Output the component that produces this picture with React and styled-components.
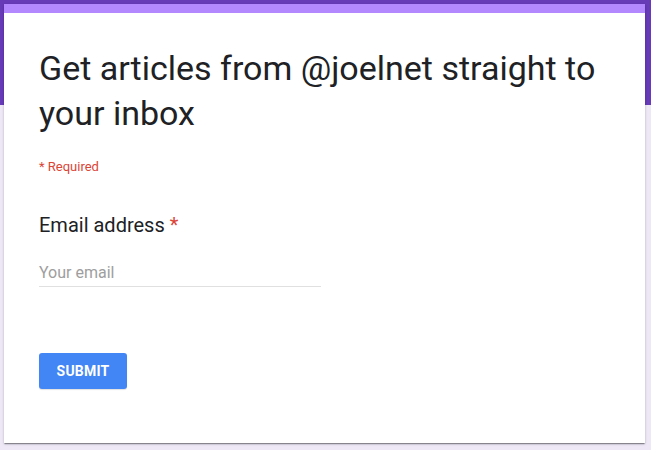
import React from 'react';
import styled, { createGlobalStyle } from 'styled-components';

const COLORS = {
  band: '#673ab7',
  page: '#ede7f6',
  accent: '#b388ff',
  text: '#202124',
  required: '#db4437',
  placeholder: '#9e9e9e',
  line: '#e0e0e0',
  button: '#4285f4',
  white: '#ffffff',
};

const GlobalStyle = createGlobalStyle`
  html, body {
    margin: 0;
    padding: 0;
  }
  body {
    font-family: Roboto, "Liberation Sans", Arial, sans-serif;
    background: ${COLORS.page};
  }
`;

const App = () => {
  return (
    <>
      <GlobalStyle />
      <Page>
        <Card>
          <Title>Get articles from @joelnet straight to your inbox</Title>
          <RequiredNote>* Required</RequiredNote>
          <Question>
            <Label>
              Email address <Star>*</Star>
            </Label>
            <EmailInput type="email" placeholder="Your email" />
          </Question>
          <SubmitButton type="button">Submit</SubmitButton>
        </Card>
      </Page>
    </>
  );
};

export default App;

const Page = styled.div`
  min-height: 450px;
  padding: 4px 6px 0 4px;
  box-sizing: border-box;
  background: linear-gradient(${COLORS.band} 0 105px, ${COLORS.page} 105px);
`;

const Card = styled.div`
  display: flex;
  flex-direction: column;
  align-items: flex-start;
  width: 641px;
  height: 439px;
  box-sizing: border-box;
  padding: 33px 35px 0;
  background: ${COLORS.white};
  border-top: 9px solid ${COLORS.accent};
  box-shadow: 0 2px 1px -1px rgba(0, 0, 0, 0.25), 0 1px 1px 0 rgba(0, 0, 0, 0.16),
    0 1px 3px 0 rgba(0, 0, 0, 0.14);
`;

const Title = styled.h1`
  margin: 0;
  font-size: 34px;
  font-weight: 400;
  line-height: 45px;
  color: ${COLORS.text};
  max-width: 570px;
`;

const RequiredNote = styled.div`
  margin-top: 23px;
  font-size: 13px;
  line-height: 16px;
  color: ${COLORS.required};
`;

const Question = styled.div`
  display: flex;
  flex-direction: column;
  margin-top: 38px;
`;

const Label = styled.div`
  font-size: 20px;
  line-height: 24px;
  color: ${COLORS.text};
`;

const Star = styled.span`
  color: ${COLORS.required};
`;

const EmailInput = styled.input`
  margin-top: 23px;
  width: 282px;
  height: 27px;
  box-sizing: border-box;
  padding: 0 0 2px;
  border: none;
  border-bottom: 1px solid ${COLORS.line};
  outline: none;
  font-family: inherit;
  font-size: 16px;
  color: ${COLORS.text};
  background: transparent;

  &::placeholder {
    color: ${COLORS.placeholder};
  }
`;

const SubmitButton = styled.button`
  margin-top: 66px;
  width: 88px;
  height: 36px;
  border: none;
  border-radius: 3px;
  background: ${COLORS.button};
  color: ${COLORS.white};
  font-family: inherit;
  font-size: 14px;
  font-weight: 700;
  text-transform: uppercase;
  letter-spacing: 0.2px;
  box-shadow: 0 1px 1px rgba(0, 0, 0, 0.12);
`;
